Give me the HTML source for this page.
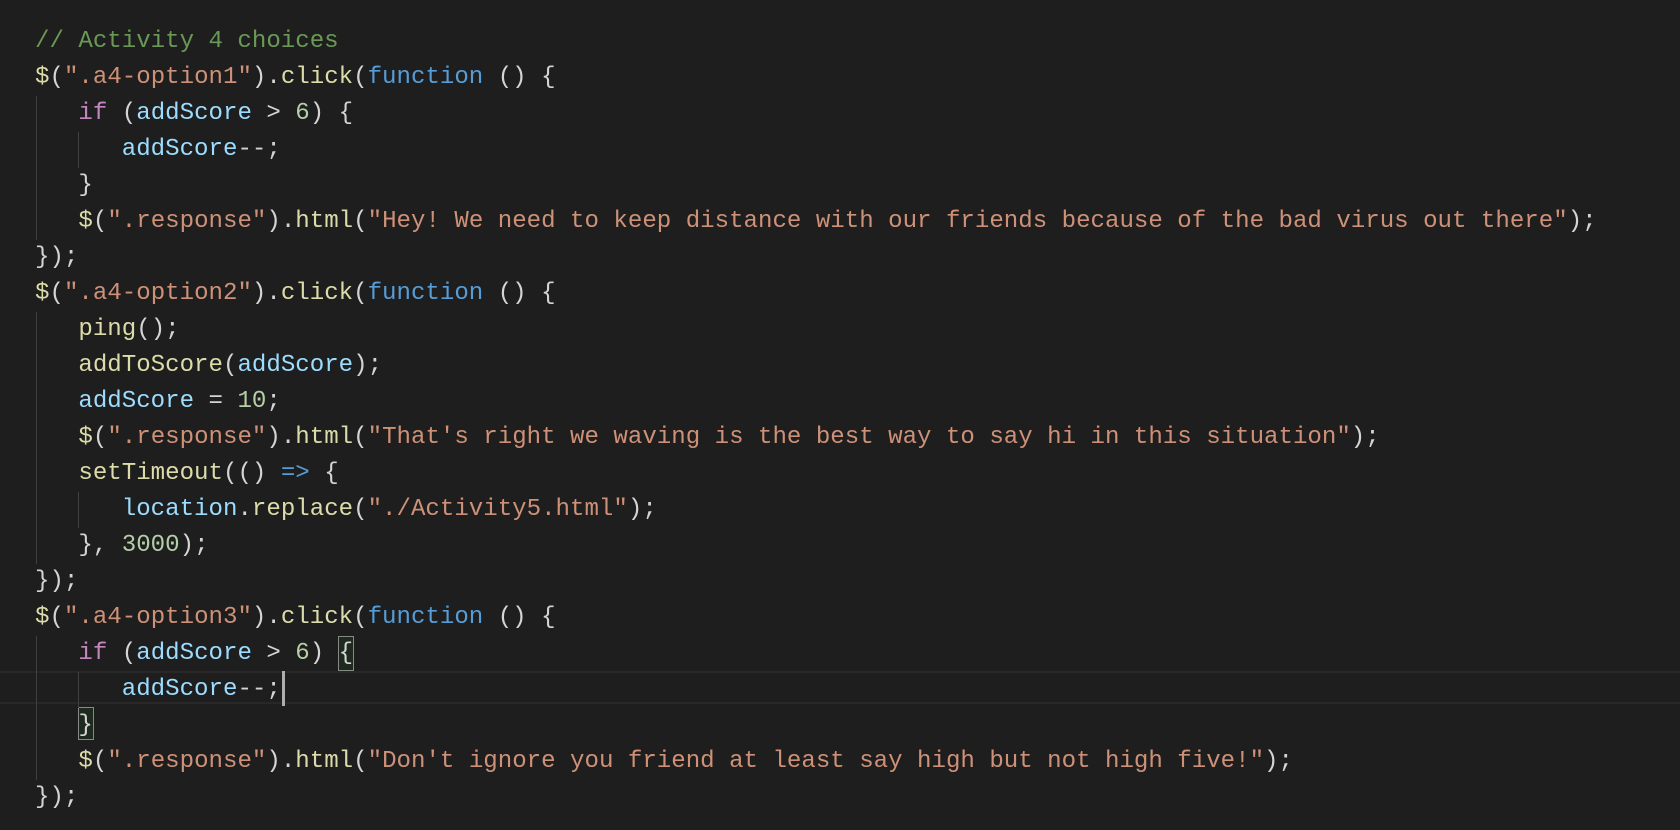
<!DOCTYPE html>
<html><head><meta charset="utf-8"><style>
html,body{margin:0;padding:0;background:#1e1e1e;width:1680px;height:830px;overflow:hidden}
#c{position:absolute;left:35px;top:24px;font-family:"Liberation Mono",monospace;font-size:24.1px;line-height:36px;color:#d4d4d4;white-space:pre}
.cm{color:#6a9955}.s{color:#ce9178}.f{color:#dcdcaa}.k{color:#569cd6}.v{color:#9cdcfe}.p{color:#c586c0}.n{color:#b5cea8}
.g{position:absolute;width:1px;background:#404040}
.cur{position:absolute;left:0;width:1680px;top:671px;height:33px;border-top:2px solid #282828;border-bottom:2px solid #282828;box-sizing:border-box}
.bb{position:absolute;border:1px solid #888;background:#1f2a1f;box-sizing:border-box}
</style></head><body>
<div class="cur"></div>
<div class="bb" style="left:338px;top:636px;width:16px;height:35px"></div>
<div class="bb" style="left:78px;top:707px;width:16px;height:33px"></div>
<div class="g" style="left:36px;top:96px;height:144px"></div>
<div class="g" style="left:78px;top:132px;height:36px"></div>
<div class="g" style="left:36px;top:312px;height:252px"></div>
<div class="g" style="left:78px;top:492px;height:36px"></div>
<div class="g" style="left:36px;top:636px;height:144px"></div>
<div class="g" style="left:78px;top:672px;height:36px"></div>
<div style="position:absolute;left:282px;top:671px;width:3px;height:35px;background:#aeafad"></div>
<div id="c"><span class="cm">// Activity 4 choices</span>
<span class="f">$</span>(<span class="s">".a4-option1"</span>).<span class="f">click</span>(<span class="k">function</span> () {
   <span class="p">if</span> (<span class="v">addScore</span> &gt; <span class="n">6</span>) {
      <span class="v">addScore</span>--;
   }
   <span class="f">$</span>(<span class="s">".response"</span>).<span class="f">html</span>(<span class="s">"Hey! We need to keep distance with our friends because of the bad virus out there"</span>);
});
<span class="f">$</span>(<span class="s">".a4-option2"</span>).<span class="f">click</span>(<span class="k">function</span> () {
   <span class="f">ping</span>();
   <span class="f">addToScore</span>(<span class="v">addScore</span>);
   <span class="v">addScore</span> = <span class="n">10</span>;
   <span class="f">$</span>(<span class="s">".response"</span>).<span class="f">html</span>(<span class="s">"That's right we waving is the best way to say hi in this situation"</span>);
   <span class="f">setTimeout</span>(() <span class="k">=&gt;</span> {
      <span class="v">location</span>.<span class="f">replace</span>(<span class="s">"./Activity5.html"</span>);
   }, <span class="n">3000</span>);
});
<span class="f">$</span>(<span class="s">".a4-option3"</span>).<span class="f">click</span>(<span class="k">function</span> () {
   <span class="p">if</span> (<span class="v">addScore</span> &gt; <span class="n">6</span>) {
      <span class="v">addScore</span>--;
   }
   <span class="f">$</span>(<span class="s">".response"</span>).<span class="f">html</span>(<span class="s">"Don't ignore you friend at least say high but not high five!"</span>);
});</div>
</body></html>
